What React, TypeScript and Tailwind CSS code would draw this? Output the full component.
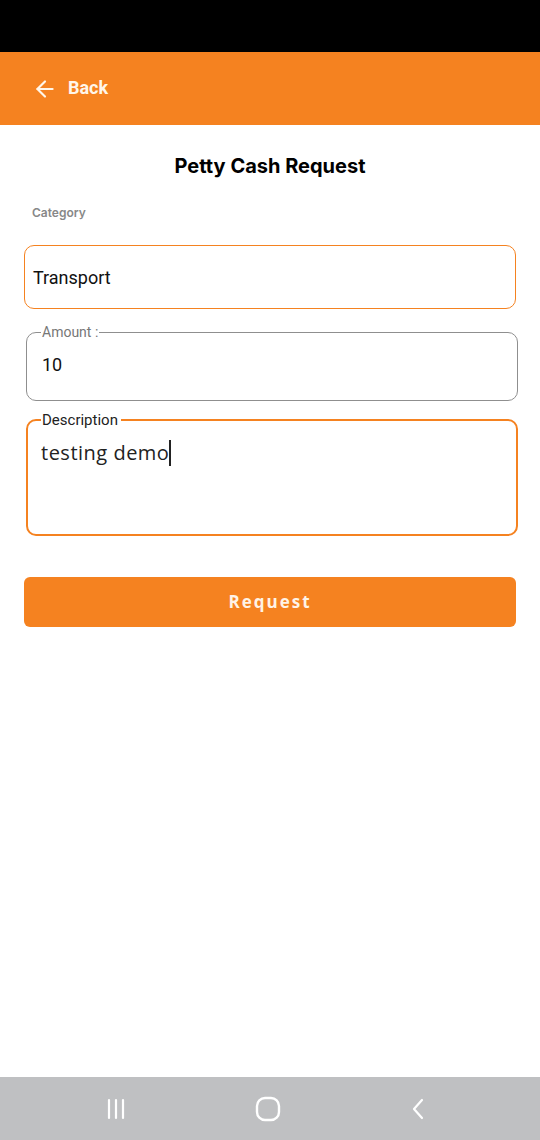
import {ArrowLeft} from 'lucide-react';

export default function App() {
    return (
        <div className="w-[540px] h-[1140px] flex flex-col bg-white font-['Roboto',sans-serif] overflow-hidden">
            {/* Status bar */}
            <div className="h-[52px] bg-black" />

            {/* Header */}
            <div className="h-[73px] bg-[#f58220] flex items-center pl-[32px] gap-[10px] text-[#fff6ea]">
                <ArrowLeft size={26} strokeWidth={2} />
                <span className="text-[18px] font-bold -mt-[2px]">Back</span>
            </div>

            {/* Form */}
            <div className="flex-1 flex flex-col px-[24px]">
                <h1 className="text-center text-[20px] font-bold text-black font-['Inter',sans-serif] mt-[28px] leading-[26px]">
                    Petty Cash Request
                </h1>
                <p className="text-[12px] font-semibold text-[#888] font-['Inter',sans-serif] mt-[26px] ml-[8px] leading-[16px]">
                    Category
                </p>

                <div className="mt-[24px] h-[64px] border border-[#f58220] rounded-[10px] flex items-center px-[8px] text-[18px] text-[#111]">
                    Transport
                </div>

                <fieldset className="mt-[15px] ml-[2px] -mr-[2px] h-[77px] border border-[#8f8f8f] rounded-[10px] px-[14px] pb-0">
                    <legend className="text-[14px] text-[#777] px-[1px] leading-[16px]">Amount :</legend>
                    <div className="text-[18px] text-[#111] mt-[11px] ml-[1px]">10</div>
                </fieldset>

                <fieldset className="mt-[10px] ml-[2px] -mr-[2px] h-[125px] border-2 border-[#f58220] rounded-[10px] px-[13px]">
                    <legend className="text-[15px] text-[#222] pl-[1px] pr-[3px] leading-[18px]">Description</legend>
                    <div className="text-[20px] text-[#222] font-['Open_Sans',sans-serif] tracking-[0.5px] mt-[9px] flex items-center">
                        testing demo<span className="inline-block w-[2px] h-[26px] bg-[#222]" />
                    </div>
                </fieldset>

                <button className="mt-[41px] h-[50px] bg-[#f58220] rounded-[6px] text-[#fff3e6] text-[17px] font-bold tracking-[2px] font-['Open_Sans',sans-serif]">
                    Request
                </button>
            </div>

            {/* Nav bar */}
            <div className="h-[63px] bg-[#bfc0c2] flex items-center justify-between pl-[104px] pr-[109px]">
                <svg width="24" height="24" viewBox="0 0 24 24" fill="none" stroke="#fff" strokeWidth="2.2" strokeLinecap="round">
                    <line x1="5" y1="3" x2="5" y2="21" />
                    <line x1="12" y1="3" x2="12" y2="21" />
                    <line x1="19" y1="3" x2="19" y2="21" />
                </svg>
                <svg width="26" height="26" viewBox="0 0 26 26" fill="none" stroke="#fff" strokeWidth="2.4">
                    <rect x="2" y="2" width="22" height="22" rx="8" />
                </svg>
                <svg width="24" height="24" viewBox="0 0 24 24" fill="none" stroke="#fff" strokeWidth="2.2" strokeLinecap="round" strokeLinejoin="round">
                    <polyline points="15,3 7,12 15,21" />
                </svg>
            </div>
        </div>
    );
}
